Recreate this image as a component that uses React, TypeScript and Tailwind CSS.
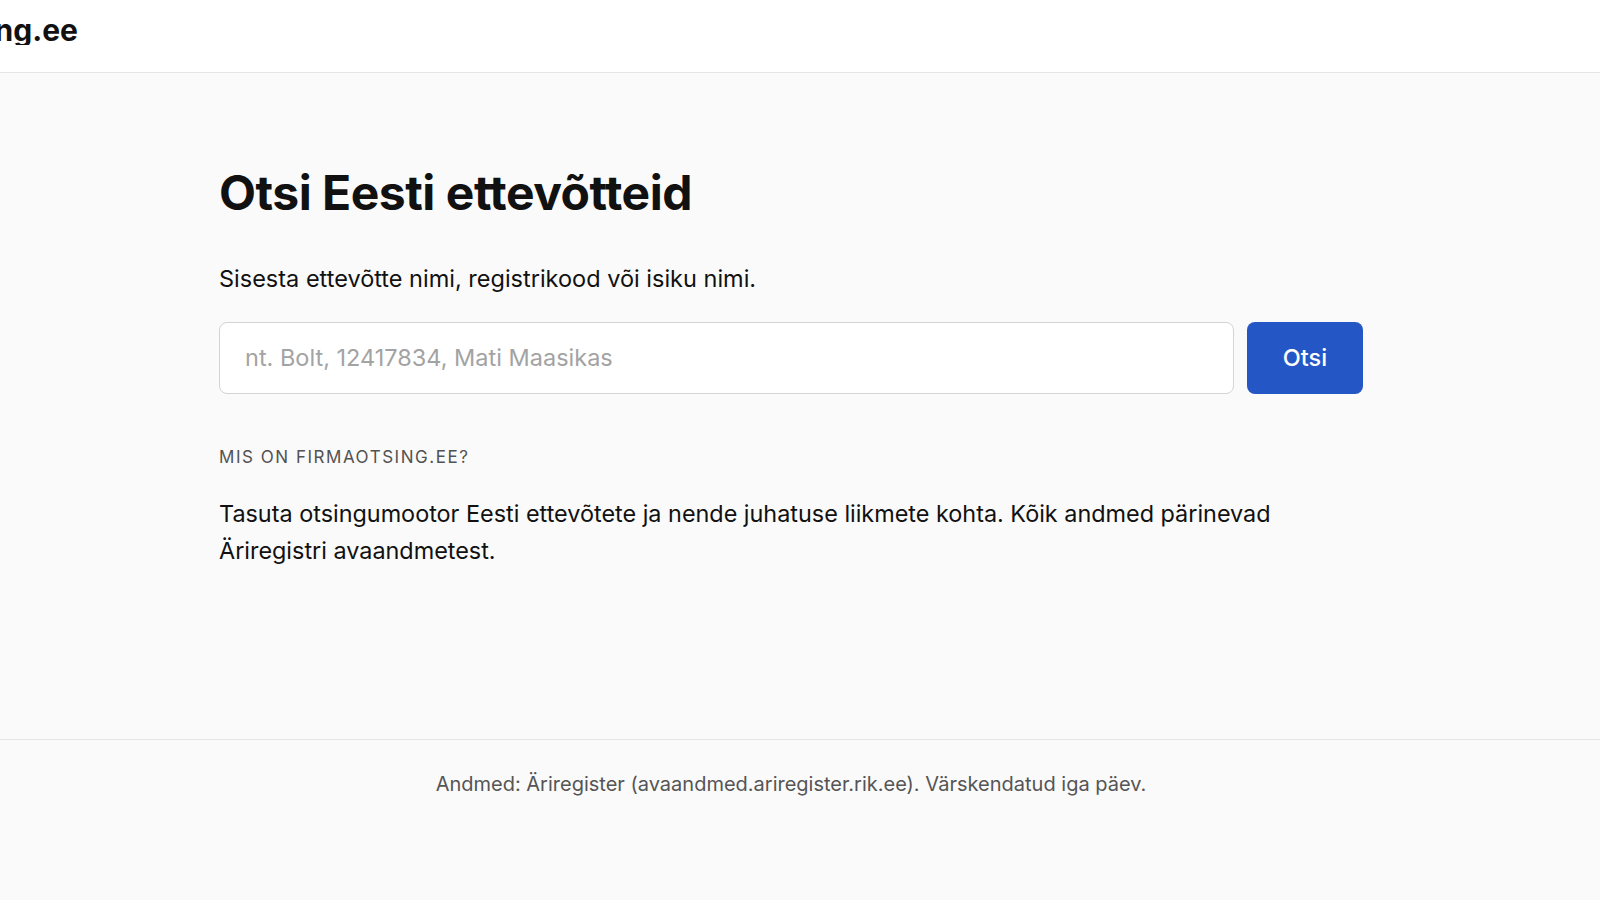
import React from 'react';

const font = { fontFamily: 'Inter, "Noto Sans", sans-serif' };

const App: React.FC = () => {
    return (
        <div className="min-h-screen bg-[#fafafa] flex flex-col text-[#111]" style={font}>
            {/* header */}
            <header className="h-[73px] bg-white border-b border-[#e5e5e5] flex items-start pt-[15px]">
                <div className="w-[78px] overflow-hidden flex justify-end">
                    <span className="whitespace-nowrap text-[30px] font-bold leading-none">firmaotsing.ee</span>
                </div>
            </header>

            {/* main */}
            <main className="flex-1 pr-[18px]">
                <div className="w-[1144px] mx-auto pt-[96px] pb-[116px]">
                    <h1 className="text-[48px] font-bold leading-none tracking-[-0.01em]">Otsi Eesti ettevõtteid</h1>
                    <p className="mt-[46px] text-[23.5px] leading-[1.4]">Sisesta ettevõtte nimi, registrikood või isiku nimi.</p>

                    <form className="mt-[26px] flex gap-[13px]">
                        <input
                            type="text"
                            className="flex-1 h-[72px] bg-white border border-[#d4d4d4] rounded-[8px] px-[25px] text-[23.5px] placeholder:text-[#a3a3a3] outline-none"
                            placeholder="nt. Bolt, 12417834, Mati Maasikas"
                        />
                        <button type="submit" className="w-[116px] h-[72px] rounded-[8px] bg-[#2457c5] text-white text-[23.5px] font-medium">Otsi</button>
                    </form>

                    <h2 className="mt-[51px] text-[17px] leading-[1.5] uppercase tracking-[0.09em] text-[#525252]">Mis on firmaotsing.ee?</h2>
                    <p className="mt-[25px] text-[23.4px] leading-[37px] max-w-[1100px]">
                        Tasuta otsingumootor Eesti ettevõtete ja nende juhatuse liikmete kohta. Kõik andmed pärinevad Äriregistri avaandmetest.
                    </p>
                </div>
            </main>

            {/* footer */}
            <footer className="border-t border-[#e5e5e5] pr-[18px] pt-[29px] pb-[101px] text-center text-[20px] leading-[1.5] text-[#555]">
                Andmed: Äriregister (avaandmed.ariregister.rik.ee). Värskendatud iga päev.
            </footer>
        </div>
    );
};

export default App;
